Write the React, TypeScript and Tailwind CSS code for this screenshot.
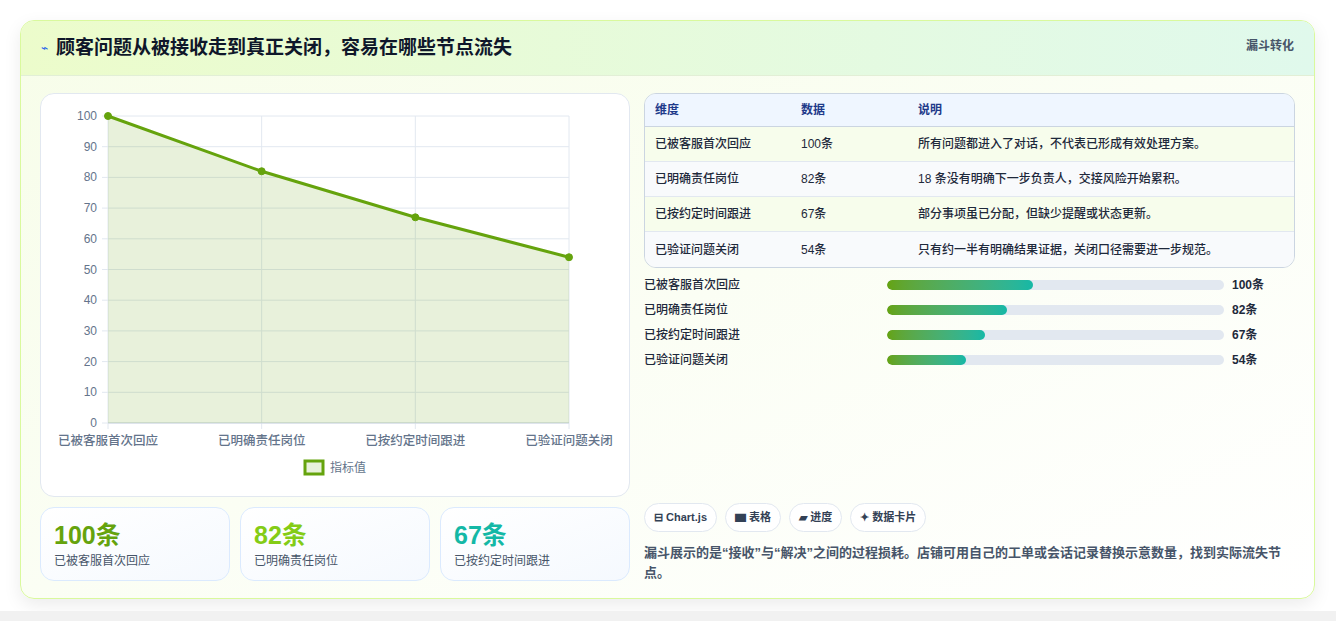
import React from "react";

const labels = ["已被客服首次回应", "已明确责任岗位", "已按约定时间跟进", "已验证问题关闭"];
const vals = [100, 82, 67, 54];
const notes = [
  "所有问题都进入了对话，不代表已形成有效处理方案。",
  "18 条没有明确下一步负责人，交接风险开始累积。",
  "部分事项虽已分配，但缺少提醒或状态更新。",
  "只有约一半有明确结果证据，关闭口径需要进一步规范。",
];
const barPct = [43.3, 35.6, 29, 23.4];

function Chart() {
  const x0 = 67, x1 = 528, y0 = 22, y1 = 329;
  const xs = [0, 1, 2, 3].map((i) => x0 + ((x1 - x0) * i) / 3);
  const yv = (v: number) => y0 + ((100 - v) / 100) * (y1 - y0);
  const pts = vals.map((v, i) => `${xs[i]},${yv(v)}`).join(" ");
  return (
    <svg width="590" height="400" className="block" style={{ fontFamily: "'Liberation Sans','Noto Sans CJK SC',sans-serif" }}>
      {Array.from({ length: 11 }, (_, i) => {
        const v = i * 10;
        const y = yv(v);
        return (
          <g key={i}>
            <line x1={x0 - 6} x2={x1} y1={y} y2={y} stroke="#e2e8f0" />
            <text x={x0 - 11} y={y + 4} textAnchor="end" fontSize="12" fill="#64748b">{v}</text>
          </g>
        );
      })}
      {xs.map((x, i) => (
        <line key={i} x1={x} x2={x} y1={y0} y2={y1 + 6} stroke="#e2e8f0" />
      ))}
      <line x1={x0} x2={x1} y1={y1} y2={y1} stroke="#cbd5e1" />
      <polygon points={`${x0},${y1} ${pts} ${x1},${y1}`} fill="rgba(101,163,13,0.15)" />
      <polyline points={pts} fill="none" stroke="#65a30d" strokeWidth="3" />
      {vals.map((v, i) => (
        <circle key={i} cx={xs[i]} cy={yv(v)} r="3.5" fill="#65a30d" stroke="#65a30d" />
      ))}
      {labels.map((l, i) => (
        <text key={i} x={xs[i]} y={351} textAnchor="middle" fontSize="12.5" fontWeight="500" fill="#64748b">{l}</text>
      ))}
      <rect x="264" y="367" width="18" height="13" fill="rgba(101,163,13,0.15)" stroke="#65a30d" strokeWidth="3" />
      <text x="289" y="378" fontSize="12" fill="#64748b">指标值</text>
    </svg>
  );
}

export default function App() {
  return (
    <div className="w-[1336px] h-[621px] bg-white" style={{ fontFamily: "'Liberation Sans','Noto Sans CJK SC',sans-serif" }}>
      <div className="pt-[20px] px-[20px] h-[611px] bg-white">
        <div className="w-[1295px] h-[579px] rounded-[14px] border border-[#d9f99d] bg-gradient-to-br from-[#f7fde9] to-[#ffffff] shadow-[0_6px_18px_rgba(0,0,0,0.08)] overflow-hidden">
          <div className="h-[55px] flex items-center justify-between px-[20px] bg-gradient-to-r from-[#ecfccb] to-[#e0f9ec] border-b border-[#e2efd6]">
            <div className="flex items-center gap-[8px]">
              <span className="text-[#2563eb] text-[12px]">⌁</span>
              <span className="text-[19px] font-bold text-[#0f172a]">顾客问题从被接收走到真正关闭，容易在哪些节点流失</span>
            </div>
            <span className="text-[12px] font-bold text-[#475569] self-start mt-[16px]">漏斗转化</span>
          </div>
          <div className="flex px-[19px] pt-[17px] gap-[14px]">
            <div className="w-[590px]">
              <div className="h-[404px] rounded-[14px] border border-[#e2e8f0] bg-white">
                <Chart />
              </div>
              <div className="grid grid-cols-3 gap-[10px] mt-[10px]">
                {[
                  ["100条", "text-[#65a30d]", labels[0]],
                  ["82条", "text-[#84cc16]", labels[1]],
                  ["67条", "text-[#14b8a6]", labels[2]],
                ].map(([v, c, l]) => (
                  <div key={v} className="h-[74px] rounded-[14px] border border-[#dbeafe] bg-gradient-to-br from-white to-[#f5f9fe] px-[13px] pt-[12px]">
                    <div className={`text-[25px] font-bold leading-[30px] ${c}`}>{v}</div>
                    <div className="text-[12px] text-[#475569] mt-[2px]">{l}</div>
                  </div>
                ))}
              </div>
            </div>
            <div className="w-[652px] flex flex-col">
              <div className="rounded-[12px] border border-[#cbd5e1] overflow-hidden text-[12px]">
                <div className="h-[33px] flex items-center bg-[#eff6ff] text-[#1e3a8a] font-bold border-b border-[#cbd5e1]">
                  <div className="w-[156px] pl-[10px]">维度</div>
                  <div className="w-[117px]">数据</div>
                  <div>说明</div>
                </div>
                {labels.map((l, i) => (
                  <div key={l} className={`h-[35px] flex items-center text-[#1e293b] font-medium ${i < 3 ? "border-b border-[#e2e8f0]" : ""} ${i % 2 === 0 ? "bg-[#f7fdec]" : "bg-[#f8fafc]"}`}>
                    <div className="w-[156px] pl-[10px]">{l}</div>
                    <div className="w-[117px]">{vals[i]}条</div>
                    <div>{notes[i]}</div>
                  </div>
                ))}
              </div>
              <div className="mt-[7px] flex flex-col gap-[6px]">
                {labels.map((l, i) => (
                  <div key={l} className="h-[19px] flex items-center text-[12px] font-medium">
                    <div className="w-[243px] text-[#1e293b]">{l}</div>
                    <div className="w-[337px] h-[10px] rounded-full bg-[#e2e8f0] overflow-hidden">
                      <div className="h-full rounded-full bg-gradient-to-r from-[#65a30d] to-[#14b8a6]" style={{ width: `${barPct[i]}%` }} />
                    </div>
                    <div className="ml-[8px] font-bold text-[#1e293b]">{vals[i]}条</div>
                  </div>
                ))}
              </div>
              <div className="mt-[134px] flex gap-[8px]">
                {["⊟ Chart.js", "▆ 表格", "▰ 进度", "✦ 数据卡片"].map((t) => (
                  <div key={t} className="h-[29px] px-[9px] rounded-full border border-[#e2e8f0] bg-white flex items-center text-[11px] font-bold text-[#334155]">{t}</div>
                ))}
              </div>
              <div className="mt-[11px] text-[13px] leading-[20px] text-[#475569] font-bold pr-[14px]">
                漏斗展示的是“接收”与“解决”之间的过程损耗。店铺可用自己的工单或会话记录替换示意数量，找到实际流失节点。
              </div>
            </div>
          </div>
        </div>
      </div>
      <div className="h-[10px] bg-[#f1f1f1]" />
    </div>
  );
}
